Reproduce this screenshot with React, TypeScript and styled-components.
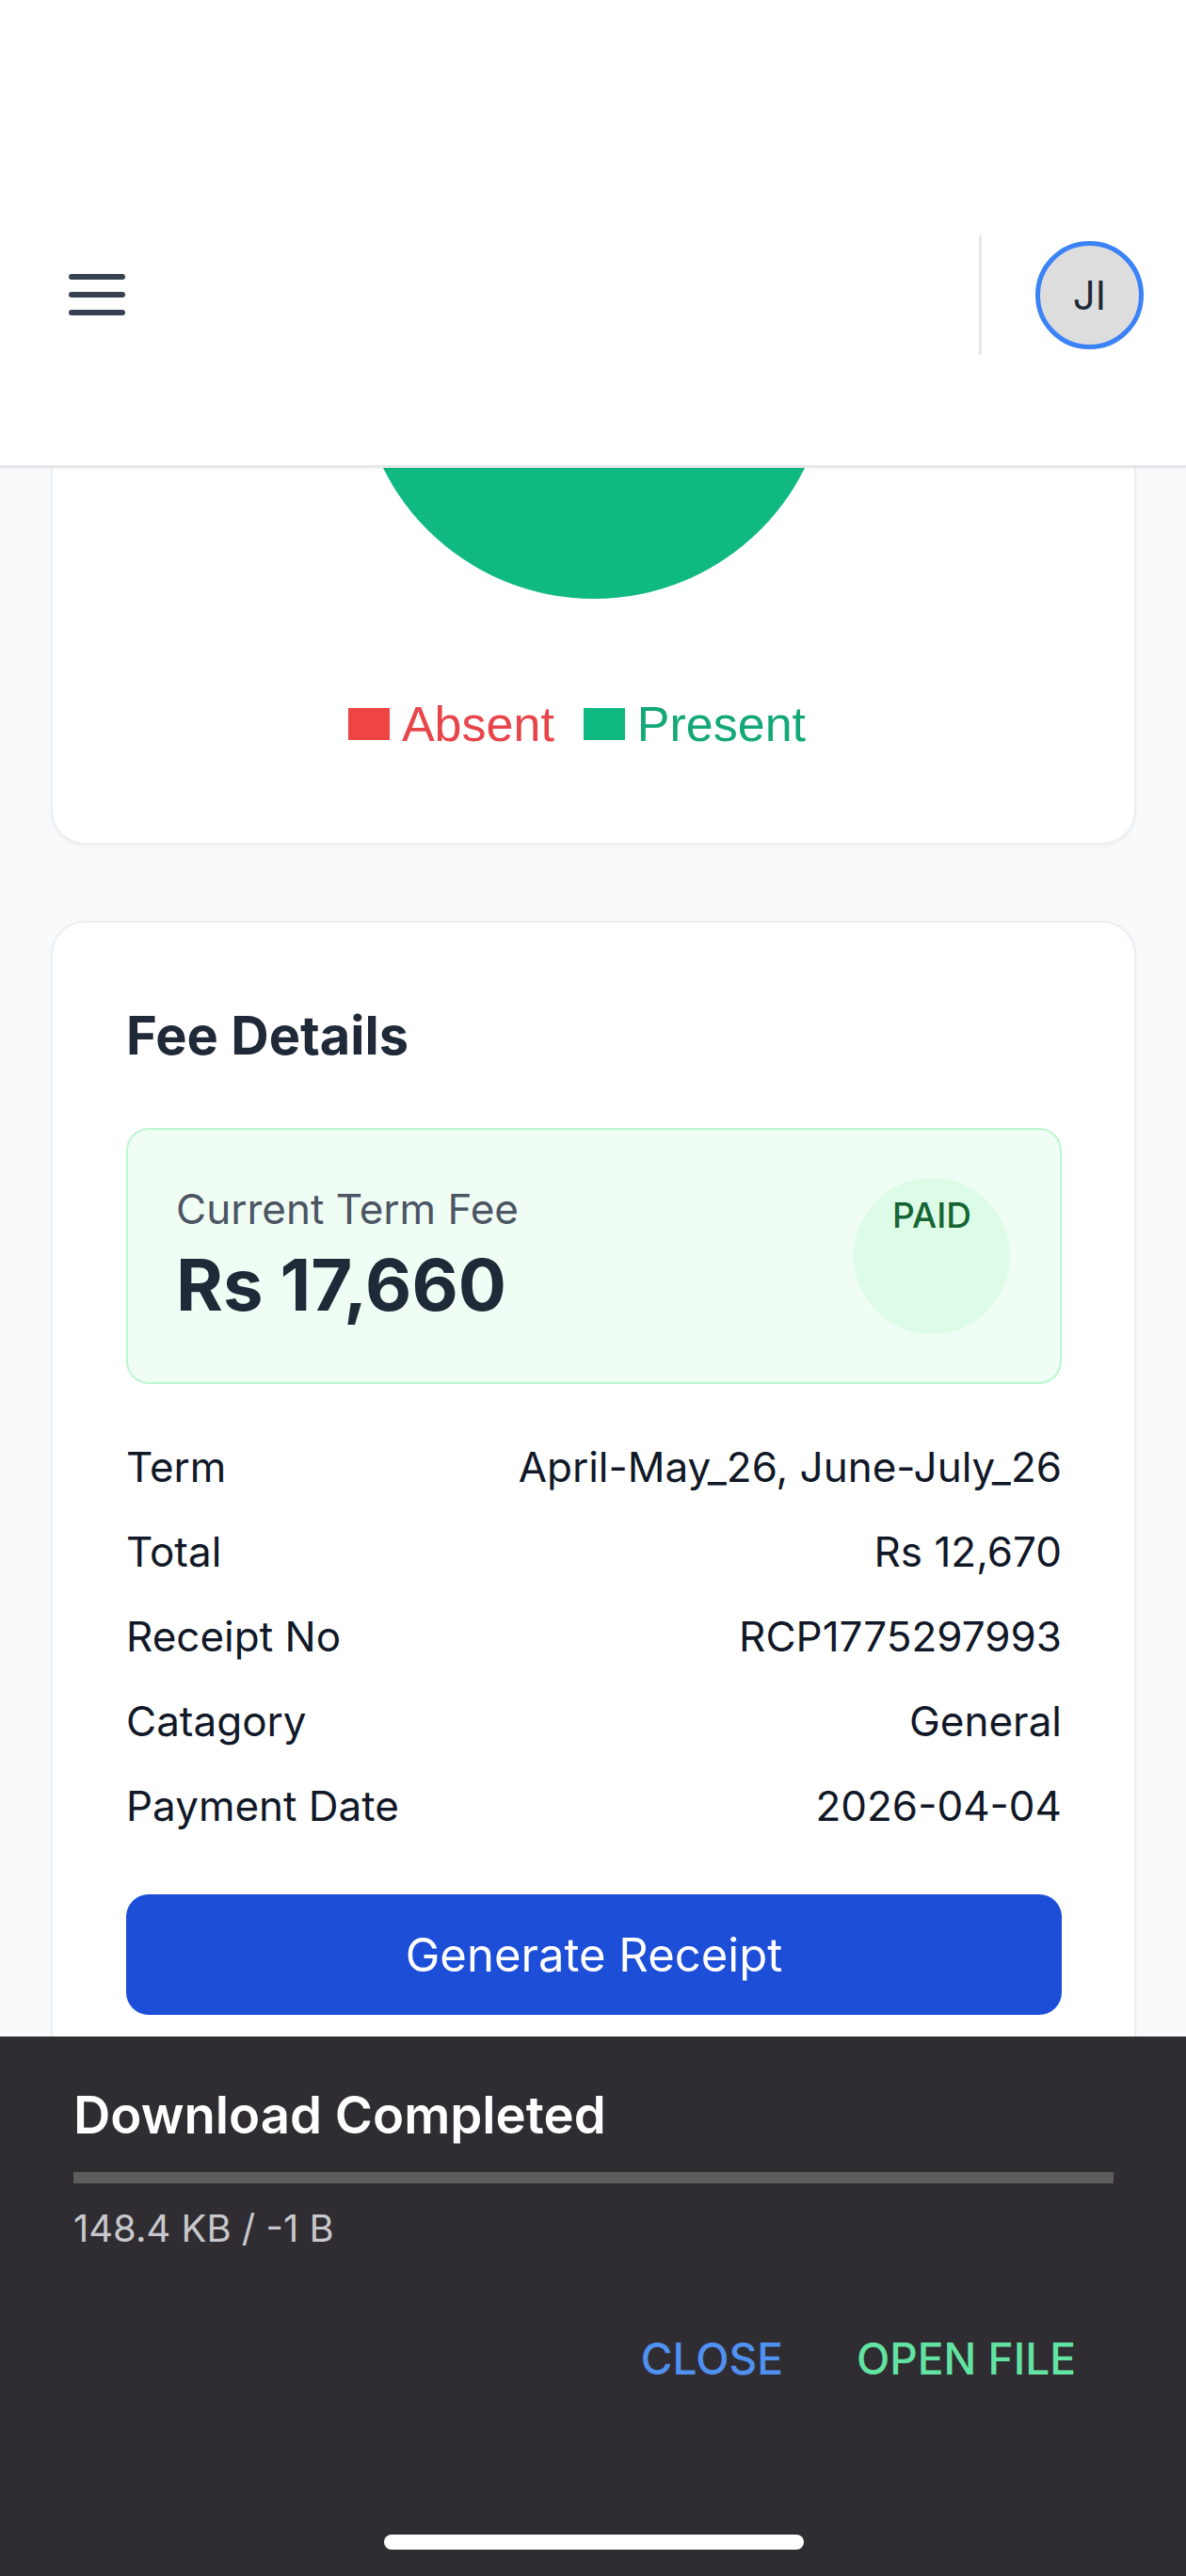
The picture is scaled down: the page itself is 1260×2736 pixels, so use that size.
import React from 'react'
import styled, { createGlobalStyle } from 'styled-components'

const GlobalStyle = createGlobalStyle`
  * {
    box-sizing: border-box;
  }
  body {
    margin: 0;
    background: #f9fafb;
    font-family: Inter, "Noto Sans", "Liberation Sans", sans-serif;
    color: #1f2937;
  }
`

const Screen = styled.div`
  position: relative;
  width: 1260px;
  height: 2736px;
  overflow: hidden;
  background: #f9fafb;
`

const Header = styled.header`
  position: absolute;
  top: 0;
  left: 0;
  right: 0;
  z-index: 5;
  height: 497px;
  padding: 132px 45px 0 73px;
  display: flex;
  align-items: center;
  background: #ffffff;
  border-bottom: 3px solid #e5e7eb;
  box-shadow: 0 1px 3px rgba(0, 0, 0, 0.04);
`

const MenuButton = styled.button`
  display: flex;
  padding: 0;
  border: none;
  background: none;
`

const Spacer = styled.div`
  flex: 1;
`

const Divider = styled.div`
  width: 3px;
  height: 127px;
  background: #e5e7eb;
  margin-right: 57px;
`

const Avatar = styled.div`
  width: 115px;
  height: 115px;
  border-radius: 50%;
  border: 5px solid #3b82f6;
  background: #dddddd;
  display: flex;
  align-items: center;
  justify-content: center;
  font-size: 42px;
  color: #1f2937;
`

const Main = styled.main`
  display: flex;
  flex-direction: column;
  gap: 81px;
  padding: 100px 53px 0 54px;
`

const Card = styled.section`
  background: #ffffff;
  border: 2px solid #eceef1;
  border-radius: 36px;
  box-shadow: 0 2px 4px rgba(0, 0, 0, 0.04);
`

const ChartCard = styled(Card)`
  display: flex;
  flex-direction: column;
  align-items: center;
  padding: 33px 0 109px;
`

const Legend = styled.div`
  display: flex;
  align-items: center;
  gap: 31px;
  margin: 115px 35px 0 0;
  font-family: "Liberation Sans", Arial, sans-serif;
  font-size: 52px;
  line-height: 34px;
`

const LegendItem = styled.div<{ $color: string }>`
  display: flex;
  align-items: center;
  gap: 13px;
  color: ${(p) => p.$color};
`

const LegendBox = styled.span<{ $color: string }>`
  width: 44px;
  height: 34px;
  background: ${(p) => p.$color};
`

const FeeCard = styled(Card)`
  padding: 86px 77px 300px 78px;
`

const Title = styled.h2`
  margin: 0 0 64px;
  font-size: 56px;
  line-height: 68px;
  font-weight: 700;
  color: #1f2937;
`

const FeeBox = styled.div`
  display: flex;
  align-items: center;
  justify-content: space-between;
  padding: 51px 53px 51px 51px;
  background: #f0fdf4;
  border: 2px solid #bbf7d0;
  border-radius: 24px;
`

const FeeLabel = styled.div`
  font-size: 44px;
  line-height: 53px;
  color: #4b5563;
`

const FeeAmount = styled.div`
  margin-top: 7px;
  font-size: 76px;
  line-height: 92px;
  font-weight: 700;
  color: #1f2937;
`

const PaidBadge = styled.div`
  width: 166px;
  height: 166px;
  border-radius: 50%;
  background: #dcfce7;
  display: flex;
  justify-content: center;
  padding-top: 17px;
  font-size: 37px;
  line-height: 45px;
  font-weight: 500;
  color: #166534;
`

const Rows = styled.div`
  display: flex;
  flex-direction: column;
  gap: 37px;
  margin-top: 62px;
`

const Row = styled.div`
  display: flex;
  justify-content: space-between;
  font-size: 44px;
  line-height: 53px;
  color: #111827;
`

const PrimaryButton = styled.button`
  display: block;
  width: 100%;
  height: 128px;
  margin-top: 67px;
  border: none;
  border-radius: 24px;
  background: #1d4ed8;
  color: #ffffff;
  font-family: inherit;
  font-size: 49px;
`

const Sheet = styled.div`
  position: absolute;
  left: 0;
  right: 0;
  bottom: 0;
  z-index: 10;
  height: 573px;
  padding: 51px 77px 0 78px;
  display: flex;
  flex-direction: column;
  background: #2f2d32;
`

const SheetTitle = styled.div`
  font-size: 54.5px;
  line-height: 64px;
  font-weight: 600;
  color: #ffffff;
`

const Progress = styled.div`
  height: 12px;
  margin-top: 29px;
  background: #5e5e5e;
`

const SizeText = styled.div`
  margin-top: 24px;
  font-size: 40px;
  line-height: 48px;
  color: #c8c8cc;
`

const Actions = styled.div`
  display: flex;
  justify-content: flex-end;
  gap: 78px;
  margin-top: 86px;
  padding-right: 40px;
`

const ActionButton = styled.button<{ $color: string }>`
  padding: 0;
  border: none;
  background: none;
  font-family: inherit;
  font-size: 46px;
  line-height: 56px;
  font-weight: 500;
  color: ${(p) => p.$color};
`

const HomeIndicator = styled.div`
  width: 446px;
  height: 16px;
  margin: auto auto 28px;
  border-radius: 8px;
  background: #ffffff;
`

const rows = [
  ['Term', 'April-May_26, June-July_26'],
  ['Total', 'Rs 12,670'],
  ['Receipt No', 'RCP1775297993'],
  ['Catagory', 'General'],
  ['Payment Date', '2026-04-04'],
]

const App = () => {
  return (
    <Screen>
      <GlobalStyle />
      <Header>
        <MenuButton>
          <svg width="60" height="46" viewBox="0 0 60 46">
            <g stroke="#374151" strokeWidth="6" strokeLinecap="round">
              <line x1="3" y1="4" x2="57" y2="4" />
              <line x1="3" y1="23" x2="57" y2="23" />
              <line x1="3" y1="42" x2="57" y2="42" />
            </g>
          </svg>
        </MenuButton>
        <Spacer />
        <Divider />
        <Avatar>JI</Avatar>
      </Header>

      <Main>
        <ChartCard>
          <svg width="502" height="502" viewBox="0 0 502 502">
            <circle cx="251" cy="251" r="250" fill="#10b981" />
          </svg>
          <Legend>
            <LegendItem $color="#e8454b">
              <LegendBox $color="#ef4444" />
              Absent
            </LegendItem>
            <LegendItem $color="#14a878">
              <LegendBox $color="#10b981" />
              Present
            </LegendItem>
          </Legend>
        </ChartCard>

        <FeeCard>
          <Title>Fee Details</Title>
          <FeeBox>
            <div>
              <FeeLabel>Current Term Fee</FeeLabel>
              <FeeAmount>Rs 17,660</FeeAmount>
            </div>
            <PaidBadge>PAID</PaidBadge>
          </FeeBox>
          <Rows>
            {rows.map(([label, value]) => (
              <Row key={label}>
                <span>{label}</span>
                <span>{value}</span>
              </Row>
            ))}
          </Rows>
          <PrimaryButton>Generate Receipt</PrimaryButton>
        </FeeCard>
      </Main>

      <Sheet>
        <SheetTitle>Download Completed</SheetTitle>
        <Progress />
        <SizeText>148.4 KB / -1 B</SizeText>
        <Actions>
          <ActionButton $color="#5090f0">CLOSE</ActionButton>
          <ActionButton $color="#63e3a3">OPEN FILE</ActionButton>
        </Actions>
        <HomeIndicator />
      </Sheet>
    </Screen>
  )
}

export default App
